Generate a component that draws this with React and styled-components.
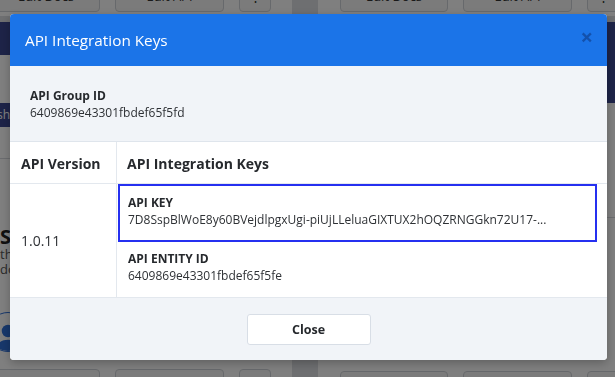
import React from "react";
import styled, { createGlobalStyle } from "styled-components";

const Global = createGlobalStyle`
  html, body { margin: 0; padding: 0; height: 100%; overflow: hidden; }
  body { background: #dcdee2; font-family: "Open Sans", "Liberation Sans", sans-serif; }
  #root { height: 100%; }
`;

/* ---------- background page ---------- */
const Page = styled.div`
  display: grid;
  grid-template-columns: 300px 320px;
  column-gap: 26px;
  margin: -20px 0 0 -8px;
`;
const Column = styled.div`
  display: flex;
  flex-direction: column;
  gap: 6px;
`;
const Card = styled.div`
  background: #fff;
  display: flex;
  flex-direction: column;
  padding: ${(p) => p.$pad || "0"};
`;
const Banner = styled.div`
  background: #3b4790;
  height: ${(p) => p.$h}px;
  margin: ${(p) => p.$m || "0"};
`;
const Badge = styled.div`
  align-self: flex-start;
  background: #3b4790;
  color: #fff;
  font-size: 12px;
  line-height: 24px;
  width: 18px;
  margin-top: 48px;
  display: flex;
  justify-content: flex-end;
  overflow: hidden;
  white-space: nowrap;
`;
const Divider = styled.div`
  border-top: 1px solid #d6d9de;
  margin: ${(p) => p.$m || "0"};
`;
const CardTitle = styled.div`
  font-size: 20px;
  font-weight: 700;
  line-height: 20px;
  color: #222;
  padding-left: 8px;
  margin-top: 68px;
  white-space: nowrap;
`;
const CardText = styled.div`
  font-size: 13px;
  color: #555;
  padding-left: 8px;
  line-height: 15px;
  white-space: nowrap;
  margin-top: ${(p) => p.$mt || 0}px;
`;
const Avatar = styled.div`
  width: 38px;
  height: 38px;
  border-radius: 50%;
  border: 1px solid #2f6fd6;
  margin: 35px 0 0 -4px;
  display: flex;
  align-items: flex-end;
  justify-content: center;
  overflow: hidden;
`;
const ButtonRow = styled.div`
  display: flex;
  gap: 15px;
  margin-top: ${(p) => p.$mt || 0}px;
  padding-bottom: ${(p) => p.$pb || 0}px;
`;
const BgButton = styled.div`
  width: ${(p) => p.$w}px;
  flex: none;
  border: 1px solid #cfd3d8;
  border-radius: 4px;
  background: #f7f7f7;
  font-size: 13px;
  color: #333;
  display: flex;
  align-items: center;
  justify-content: center;
  box-sizing: border-box;
  height: 32px;
`;

/* ---------- modal ---------- */
const Overlay = styled.div`
  position: fixed;
  inset: 0;
  background: rgba(0, 0, 0, 0.5);
  display: flex;
  align-items: flex-start;
  padding: 14px 8px 0 10px;
`;
const Modal = styled.div`
  width: 597px;
  background: #fff;
  border-radius: 4px;
  overflow: hidden;
  box-shadow: 0 3px 10px rgba(0, 0, 0, 0.25);
  color: #2e3135;
`;
const Header = styled.div`
  height: 52px;
  background: #1b74e8;
  display: flex;
  align-items: center;
  justify-content: space-between;
  padding: 0 14px 0 15px;
`;
const Title = styled.h2`
  margin: 0;
  font-size: 15.3px;
  font-weight: 400;
  color: #fff;
`;
const CloseX = styled.span`
  color: rgba(10, 40, 100, 0.45);
  font-size: 22px;
  font-weight: 700;
  line-height: 1;
  margin-top: -8px;
`;
const GroupSection = styled.div`
  background: #f1f4f8;
  border-bottom: 1px solid #dfe5ec;
  padding: 21px 20px 20px;
`;
const Label = styled.div`
  font-size: 12px;
  font-weight: 700;
  line-height: 17px;
  color: #26292d;
`;
const Value = styled.div`
  font-size: 12px;
  line-height: 17px;
  white-space: nowrap;
`;
const Table = styled.div`
  display: grid;
  grid-template-columns: 107px 1fr;
`;
const HeadCell = styled.div`
  height: 42px;
  box-sizing: border-box;
  border-bottom: 1px solid #e3e8ee;
  border-right: ${(p) => (p.$first ? "1px solid #e3e8ee" : "none")};
  display: flex;
  align-items: center;
  padding: 1px 0 0 ${(p) => (p.$first ? 11 : 10)}px;
  font-size: 14px;
  font-weight: 700;
  color: #26292d;
`;
const VersionCell = styled.div`
  border-right: 1px solid #e3e8ee;
  display: flex;
  align-items: center;
  padding: 0 0 0 11px;
  font-size: 14px;
  height: 113px;
`;
const KeysCell = styled.div`
  display: flex;
  flex-direction: column;
  padding: 0 10px 0 1px;
`;
const KeyItem = styled.div`
  padding: 8px 8px 12px;
  border: 2px solid ${(p) => (p.$active ? "#2530f0" : "transparent")};
  margin: ${(p) => (p.$active ? "0" : "-2px 0 0")};
  border-bottom-width: ${(p) => (p.$active ? 2 : 0)}px;
`;
const Footer = styled.div`
  background: #f1f4f8;
  border-top: 1px solid #e3e8ee;
  height: 62px;
  display: flex;
  align-items: center;
  justify-content: center;
`;
const CloseButton = styled.button`
  width: 124px;
  height: 31px;
  margin-top: 1px;
  background: #fff;
  border: 1px solid #d8dee6;
  border-radius: 3px;
  font-family: "Open Sans", "Liberation Sans", sans-serif;
  font-size: 12.5px;
  font-weight: 700;
  color: #26292d;
`;

const Buttons = ({ mt, pb }) => (
  <ButtonRow $mt={mt} $pb={pb}>
    <BgButton $w={108}>Edit Docs</BgButton>
    <BgButton $w={109}>Edit API</BgButton>
    <BgButton $w={32}>⋮</BgButton>
  </ButtonRow>
);

export default function App() {
  return (
    <>
      <Global />
      <Page>
        <Column>
          <Card>
            <Buttons pb={4} />
          </Card>
          <Card>
            <Banner $h={33} />
            <Badge>Publish</Badge>
            <Divider $m="31px 0 0" />
            <CardTitle>Swagger</CardTitle>
            <CardText>this is</CardText>
            <CardText>doc</CardText>
            <Avatar>
              <svg width="30" height="30" viewBox="0 0 24 24" fill="#2f6fd6">
                <circle cx="12" cy="8" r="5" />
                <path d="M2 24c0-6 4.5-9 10-9s10 3 10 9z" />
              </svg>
            </Avatar>
            <Buttons mt={17} />
          </Card>
        </Column>
        <Column>
          <Card $pad="0 0 0 22px">
            <Buttons pb={4} />
          </Card>
          <Card $pad="0 0 0 22px">
            <Banner $h={81} $m="0 0 0 -22px" />
            <CardText $mt={4}>1.0.11</CardText>
            <Divider $m="95px 0 0 -22px" />
            <Buttons mt={153} />
          </Card>
        </Column>
      </Page>

      <Overlay>
        <Modal role="dialog">
          <Header>
            <Title>API Integration Keys</Title>
            <CloseX>×</CloseX>
          </Header>
          <GroupSection>
            <Label>API Group ID</Label>
            <Value>6409869e43301fbdef65f5fd</Value>
          </GroupSection>
          <Table>
            <HeadCell $first>API Version</HeadCell>
            <HeadCell>API Integration Keys</HeadCell>
            <VersionCell>1.0.11</VersionCell>
            <KeysCell>
              <KeyItem $active>
                <Label>API KEY</Label>
                <Value>7D8SspBlWoE8y60BVejdlpgxUgi-piUjLLeluaGIXTUX2hOQZRNGGkn72U17-...</Value>
              </KeyItem>
              <KeyItem>
                <Label>API ENTITY ID</Label>
                <Value>6409869e43301fbdef65f5fe</Value>
              </KeyItem>
            </KeysCell>
          </Table>
          <Footer>
            <CloseButton>Close</CloseButton>
          </Footer>
        </Modal>
      </Overlay>
    </>
  );
}
